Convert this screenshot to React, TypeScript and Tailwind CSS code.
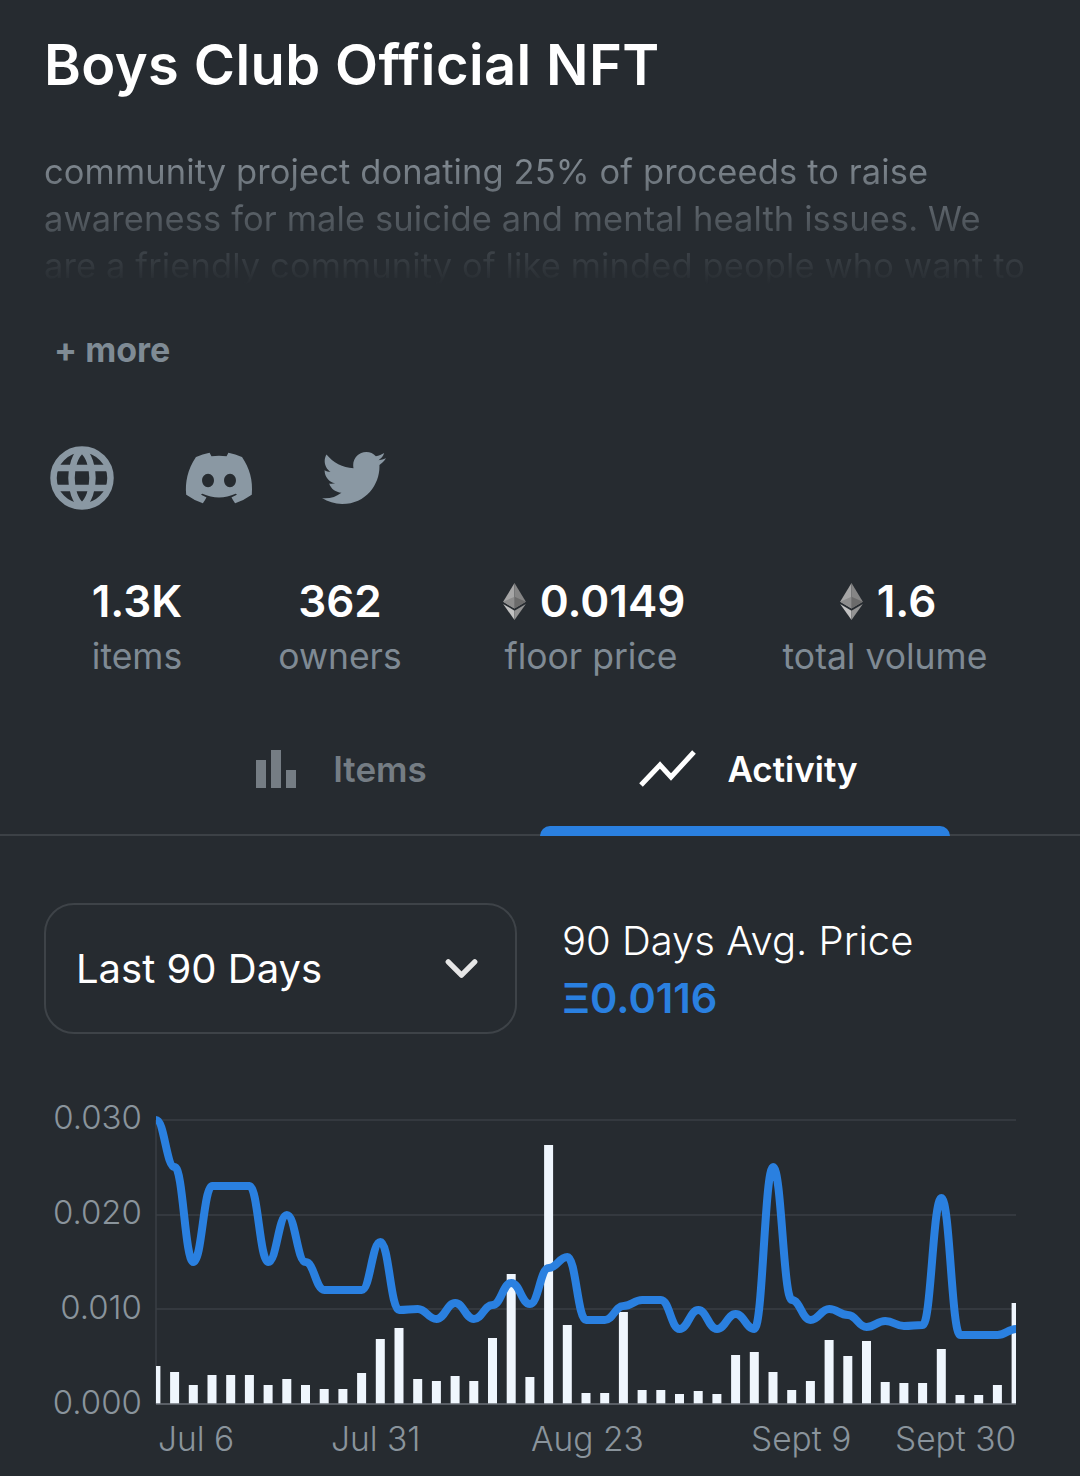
import { FaDiscord, FaTwitter } from "react-icons/fa6"
import { ChevronDown } from "lucide-react"

const BASE_Y = 1403
const STEP = 18.7

// bar heights in px, left to right
const bars = [
    38, 32, 19, 29, 29, 29, 19, 25, 19, 15, 15, 31, 65, 76, 25, 23, 28, 23, 66, 130, 27, 259, 79, 11,
    11, 92, 14, 14, 10, 13, 10, 49, 52, 32, 14, 23, 64, 48, 63, 22, 21, 21, 55, 9, 9, 19, 101,
]

// price line, y in page px
const line = [
    1119, 1166, 1261, 1185, 1185, 1185, 1261, 1214, 1261, 1289, 1289, 1289, 1241, 1309, 1308, 1318,
    1302, 1318, 1304, 1282, 1303, 1267, 1256, 1319, 1319, 1305, 1299, 1299, 1328, 1309, 1328, 1313,
    1328, 1166, 1299, 1319, 1308, 1314, 1326, 1320, 1325, 1324, 1197, 1334, 1334, 1334, 1328,
]

const stats = [
    { value: "1.3K", label: "items" },
    { value: "362", label: "owners" },
    { value: "0.0149", label: "floor price", eth: true },
    { value: "1.6", label: "total volume", eth: true },
]

const yLabels = [
    { text: "0.030", y: 1128 },
    { text: "0.020", y: 1223 },
    { text: "0.010", y: 1318 },
    { text: "0.000", y: 1413 },
]

const xLabels = [
    { text: "Jul 6", x: 158 },
    { text: "Jul 31", x: 331 },
    { text: "Aug 23", x: 531 },
    { text: "Sept 9", x: 751 },
    { text: "Sept 30", x: 895 },
]

// flat tangent at every point, like d3 curveBumpX
function bumpPath(ys: number[], step: number, x0: number) {
    let d = `M${x0} ${ys[0]}`
    for (let i = 0; i < ys.length - 1; i++) {
        const x = x0 + i * step
        const mid = step * 0.45
        d += `C${x + mid} ${ys[i]} ${x + step - mid} ${ys[i + 1]} ${x + step} ${ys[i + 1]}`
    }
    return d
}

function EthIcon() {
    return (
        <svg viewBox="0 0 256 417" className="w-[23px] h-[37px] shrink-0">
            <path d="M128 0 0 212l128 76z" fill="#a6a6a6" />
            <path d="M128 0l128 212-128 76z" fill="#858585" />
            <path d="M128 154 0 212l128 76z" fill="#8c8c8c" />
            <path d="M128 154l128 58-128 76z" fill="#6b6b6b" />
            <path d="M128 312 0 237l128 180z" fill="#c2c2c2" />
            <path d="M128 312l128-75-128 180z" fill="#949494" />
        </svg>
    )
}

function GlobeIcon() {
    return (
        <svg viewBox="0 0 64 64" className="w-[64px] h-[64px]" fill="none" stroke="#8a98a3" strokeWidth="6.5">
            <circle cx="32" cy="32" r="28.5" />
            <path d="M32 4C18 14 18 50 32 60M32 4C46 14 46 50 32 60" />
            <path d="M4 22H60M4 42H60" />
        </svg>
    )
}

function ItemsIcon() {
    return (
        <div className="flex items-end gap-[5px] h-[38px]">
            <div className="w-[10px] h-[28px] bg-[#757d84]" />
            <div className="w-[10px] h-[38px] bg-[#757d84]" />
            <div className="w-[10px] h-[18px] bg-[#757d84]" />
        </div>
    )
}

function ActivityIcon() {
    return (
        <svg viewBox="0 0 58 38" className="w-[58px] h-[38px]" fill="none" stroke="#ffffff" strokeWidth="5">
            <path d="M2 35 21 15 32 27 55 2" />
        </svg>
    )
}

function PriceChart() {
    return (
        <svg viewBox="0 1090 1080 386" className="block w-[1080px] h-[386px] font-['Inter',sans-serif]">
            <defs>
                <clipPath id="plot">
                    <rect x="156" y="1100" width="860" height="304" />
                </clipPath>
            </defs>

            {[1119, 1214, 1308].map((y) => (
                <line key={y} x1="156" x2="1016" y1={y} y2={y} stroke="#3a3f44" strokeWidth="1.5" />
            ))}
            <line x1="156" x2="156" y1="1119" y2={BASE_Y} stroke="#3a3f44" strokeWidth="1.5" />

            <g clipPath="url(#plot)">
                {bars.map((h, i) => (
                    <rect key={i} x={155.9 + i * STEP - 4.5} y={BASE_Y - h} width="9" height={h} fill="#eff6fd" />
                ))}
                <path d={bumpPath(line, STEP, 156)} fill="none" stroke="#2a80e0" strokeWidth="8" strokeLinejoin="round" />
            </g>
            <line x1="156" x2="1016" y1={BASE_Y} y2={BASE_Y} stroke="#6c7278" strokeWidth="1.5" />

            {yLabels.map((l) => (
                <text key={l.text} x="142" y={l.y} textAnchor="end" fontSize="33" fontWeight="300" fill="#8a949c">
                    {l.text}
                </text>
            ))}
            {xLabels.map((l) => (
                <text key={l.text} x={l.x} y="1450" fontSize="33.5" fontWeight="300" fill="#8a949c">
                    {l.text}
                </text>
            ))}
        </svg>
    )
}

export default function App() {
    return (
        <div className="w-[1080px] h-[1476px] overflow-hidden bg-[#262b30] font-['Inter',sans-serif]">

            <h1 className="pt-[28px] pl-[44px] text-[56px] leading-[74px] font-semibold text-white whitespace-nowrap tracking-[0.4px]">
                Boys Club Official NFT
            </h1>

            <p className="mt-[46px] ml-[44px] w-[1000px] h-[136px] overflow-hidden text-[34.5px] leading-[47px] font-normal whitespace-nowrap text-transparent bg-clip-text bg-gradient-to-b from-[#8a939b] to-[#262b30] tracking-[0.1px]">
                community project donating 25% of proceeds to raise
                <br />
                awareness for male suicide and mental health issues. We
                <br />
                are a friendly community of like minded people who want to
            </p>

            <div className="mt-[44px] ml-[54px] text-[34px] leading-[44px] font-bold text-[#7f8b95]">
                + more
            </div>

            <div className="mt-[74px] ml-[50px] flex items-center h-[64px]">
                <GlobeIcon />
                <FaDiscord className="ml-[69px] w-[72px] h-[72px] text-[#8a98a3]" />
                <FaTwitter className="ml-[67px] w-[64px] h-[64px] text-[#8a98a3]" />
            </div>

            <div className="mt-[65px] ml-[40px] grid grid-cols-[194px_212px_290px_298px]">
                {stats.map((s) => (
                    <div key={s.label} className="flex flex-col items-center">
                        <div className={s.eth ? "flex items-center gap-[14px] h-[52px] pl-[6px]" : "flex items-center gap-[14px] h-[52px]"}>
                            {s.eth && <EthIcon />}
                            <span className="text-[44px] leading-[52px] font-semibold text-white">{s.value}</span>
                        </div>
                        <span className="mt-[7px] text-[35.5px] leading-[46px] font-normal text-[#7f8a94]">{s.label}</span>
                    </div>
                ))}
            </div>

            <div className="mt-[56px] border-b-2 border-[#3c4146] flex justify-center">
                <div className="w-[410px] h-[98px] flex items-center justify-center gap-[37px] pb-[32px] pl-[13px]">
                    <ItemsIcon />
                    <span className="text-[35px] font-semibold text-[#757d84]">Items</span>
                </div>
                <div className="relative w-[410px] h-[98px] flex items-center justify-center gap-[30px] pb-[32px] pl-[7px]">
                    <ActivityIcon />
                    <span className="text-[35px] font-semibold text-white">Activity</span>
                    <div className="absolute left-0 right-0 bottom-[-2px] h-[10px] rounded-t-[10px] bg-[#2a80e0]" />
                </div>
            </div>

            <div className="mt-[67px] ml-[44px] flex items-center">
                <div className="w-[473px] h-[131px] rounded-[30px] border-2 border-[#3e4348] pl-[30px] pr-[27px] flex items-center justify-between">
                    <span className="text-[40px] text-white whitespace-nowrap">Last 90 Days</span>
                    <ChevronDown className="w-[53px] h-[53px] text-[#e6e6e6]" strokeWidth={2.4} />
                </div>
                <div className="ml-[45px] flex flex-col pt-[4px]">
                    <span className="text-[40px] leading-[52px] font-light text-white whitespace-nowrap">90 Days Avg. Price</span>
                    <span className="mt-[3px] text-[41.5px] leading-[56px] font-semibold text-[#2a80e0]">Ξ0.0116</span>
                </div>
            </div>

            <div className="mt-[57px]">
                <PriceChart />
            </div>
        </div>
    )
}
